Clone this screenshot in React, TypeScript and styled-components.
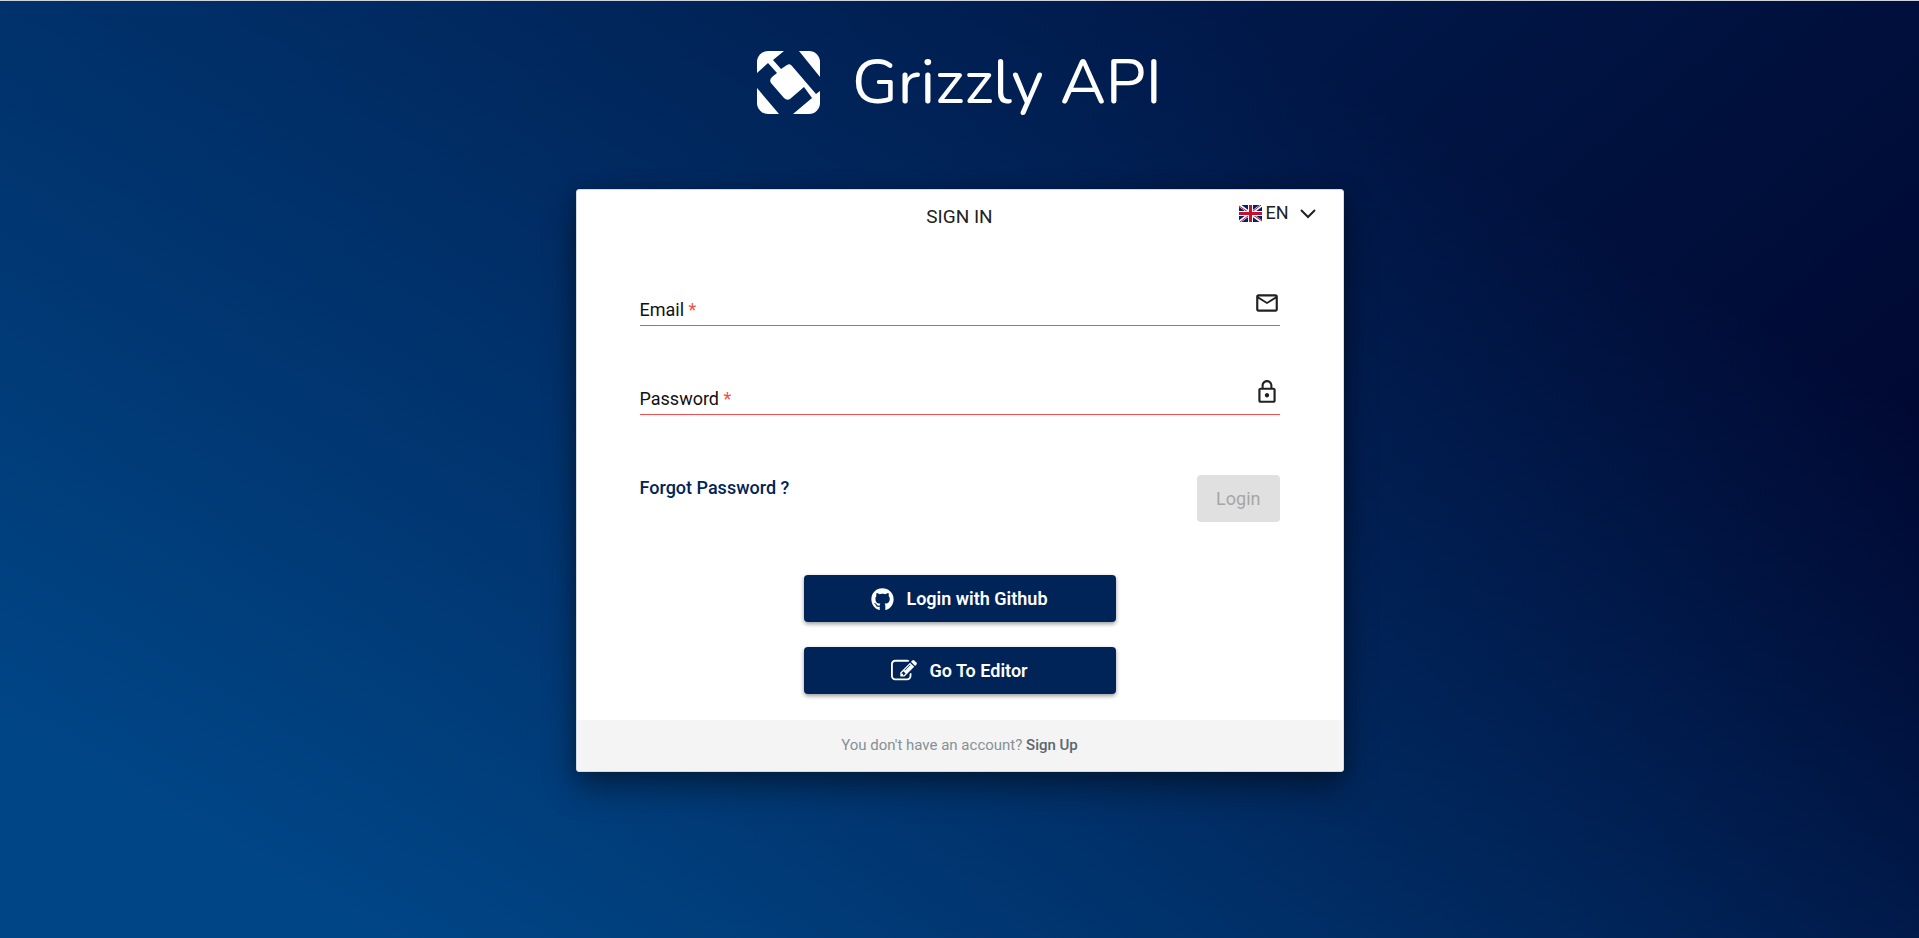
import React from "react";
import styled, { createGlobalStyle } from "styled-components";
import { FaGithub } from "react-icons/fa";
import { MdMailOutline, MdLockOutline } from "react-icons/md";

const GlobalStyle = createGlobalStyle`
  *, *::before, *::after { box-sizing: border-box; }
  body { margin: 0; font-family: Roboto, "Liberation Sans", sans-serif; }
`;

const Page = styled.main`
  min-height: 100vh;
  padding: 32px 16px;
  border-top: 1px solid #cfd4dc;
  display: flex;
  flex-direction: column;
  align-items: center;
  background:
    linear-gradient(30deg, #004586 11%, rgba(0, 69, 134, 0) 80%),
    linear-gradient(140deg, #001e50 0%, #00194a 40%, #000026 100%);
`;

const Brand = styled.header`
  display: flex;
  align-items: center;
  gap: 32px;
  height: 98px;
  margin-bottom: 58px;
  color: #fff;
`;

const BrandName = styled.h1`
  margin: 0;
  font: 400 63px/72px "Nunito", "Open Sans", sans-serif;
  white-space: nowrap;
`;

const Card = styled.section`
  width: 100%;
  max-width: 768px;
  border: 1px solid #d3dae6;
  border-radius: 3px;
  overflow: hidden;
  background: #fff;
  box-shadow: 0 16px 32px rgba(0, 0, 0, 0.4), 0 0 16px rgba(0, 0, 0, 0.2);
`;

const CardHead = styled.div`
  display: grid;
  grid-template-columns: 1fr auto 1fr;
  align-items: start;
  padding: 11px 23px 1px;
`;

const Title = styled.h2`
  grid-column: 2;
  margin: 0;
  padding-top: 2px;
  font-size: 19px;
  line-height: 28px;
  font-weight: 400;
  color: #212121;
`;

const Language = styled.div`
  justify-self: end;
  display: flex;
  align-items: center;
  gap: 4px;
  color: #212121;
`;

const LanguageSelect = styled.select`
  appearance: none;
  border: 0;
  margin: 0;
  padding: 0;
  width: 26px;
  background: transparent;
  color: inherit;
  font: 400 18px/24px Roboto, sans-serif;
`;

const Form = styled.form`
  padding: 37px 63px 26px;
`;

const Field = styled.div`
  display: grid;
  grid-template-columns: auto 1fr 26px;
  align-items: center;
  height: 57px;
  margin-bottom: 32px;
  border-bottom: 1px solid #f44e4e;

  svg {
    margin-top: 12px;
    color: #212121;
  }
`;

const FieldLabel = styled.label`
  padding-top: 25px;
  font-size: 18px;
  line-height: 24px;
  color: #111;
`;

const Required = styled.span`
  color: #f44e4e;
`;

const FieldInput = styled.input`
  min-width: 0;
  height: 32px;
  border: 0;
  outline: 0;
  background: transparent;
  font: 400 18px/24px Roboto, sans-serif;
`;

const FormActions = styled.div`
  display: flex;
  justify-content: space-between;
  align-items: flex-start;
  padding-top: 28px;
`;

const ForgotLink = styled.a`
  font-size: 18px;
  line-height: 26px;
  font-weight: 500;
  color: #002457;
  text-decoration: none;
`;

const Button = styled.button<{ $primary?: boolean }>`
  display: flex;
  align-items: center;
  justify-content: center;
  gap: 12px;
  height: 47px;
  padding: 1px 19px 0;
  border: 0;
  border-radius: 4px;
  font: ${(p) => (p.$primary ? 600 : 400)} 18px/24px Roboto, sans-serif;
  color: ${(p) => (p.$primary ? "#fff" : "#a6a6a6")};
  background: ${(p) => (p.$primary ? "#002457" : "#e0e0e0")};
  box-shadow: ${(p) => (p.$primary ? "0 2px 4px rgba(0, 0, 0, 0.4)" : "none")};
`;

const Alternatives = styled.div`
  display: grid;
  grid-template-columns: minmax(0, 312px);
  justify-content: center;
  gap: 25px;
  padding-top: 53px;
`;

const CardFoot = styled.footer`
  padding: 14px 16px;
  background: #f4f4f4;
  text-align: center;
  font-size: 15px;
  line-height: 23px;
  color: #869096;
`;

const SignUp = styled.a`
  font-weight: 500;
  color: #5b666e;
  text-decoration: none;
`;

const Logo = () => (
  <svg width="63" height="63" viewBox="0 0 63 63" aria-hidden="true">
    <defs>
      <clipPath id="tile"><rect width="63" height="63" rx="11" /></clipPath>
    </defs>
    <g fill="#fff" clipPath="url(#tile)">
      <path d="M0 0H27L16 9L24 18L30 14Q33 12 35 15L59 43L63 40V63H36L55 47L47 36L33 48Q30 50 27 47L14 32Q12 29 15 26L20 22L11 12L0 22Z" />
      <path d="M42 0H63V26Z" />
      <path d="M0 37L22 63H0Z" />
    </g>
  </svg>
);

const Flag = () => (
  <svg width="23" height="17" viewBox="0 0 23 17" aria-hidden="true">
    <path fill="#012169" d="M0 0H23V17H0Z" />
    <path stroke="#fff" strokeWidth="3" d="M0 0L23 17M23 0L0 17" />
    <path stroke="#c8102e" strokeWidth="1" d="M0 1L9 7M23 16L14 10M22 0L14 6M1 17L9 11" />
    <path stroke="#fff" strokeWidth="5" d="M11.500 0V17M0 8.500H23" />
    <path stroke="#c8102e" strokeWidth="3" d="M11.500 0V17M0 8.500H23" />
  </svg>
);

const Chevron = () => (
  <svg width="24" height="24" viewBox="0 0 24 24" fill="none" stroke="currentColor" strokeWidth="2" aria-hidden="true">
    <path d="M5 9L12 16L19 9" />
  </svg>
);

const EditIcon = () => (
  <svg width="26" height="26" viewBox="0 0 1792 1792" fill="currentColor" aria-hidden="true">
    <path d="M888 1184l116-116-152-152-116 116v56h96v96h56zm440-720q-16-16-33 1l-350 350q-17 17-1 33t33-1l350-350q17-17 1-33zm80 594v190q0 119-84.500 203.500t-203.500 84.500h-832q-119 0-203.500-84.500t-84.500-203.500v-832q0-119 84.500-203.500t203.500-84.500h832q63 0 117 25 15 7 18 23 3 17-9 29l-49 49q-14 14-32 8-23-6-45-6h-832q-66 0-113 47t-47 113v832q0 66 47 113t113 47h832q66 0 113-47t47-113v-126q0-13 9-22l64-64q15-15 35-7t20 29zm-96-738l288 288-672 672h-288v-288zm444 132l-92 92-288-288 92-92q28-28 68-28t68 28l152 152q28 28 28 68t-28 68z" />
  </svg>
);

export default function App() {
  return (
    <>
      <GlobalStyle />
      <Page>
        <Brand>
          <Logo />
          <BrandName>Grizzly API</BrandName>
        </Brand>
        <Card>
          <CardHead>
            <Title>SIGN IN</Title>
            <Language>
              <Flag />
              <LanguageSelect aria-label="Language" defaultValue="EN">
                <option>EN</option>
                <option>FR</option>
              </LanguageSelect>
              <Chevron />
            </Language>
          </CardHead>
          <Form onSubmit={(e) => e.preventDefault()}>
            <Field>
              <FieldLabel htmlFor="email">Email <Required>*</Required></FieldLabel>
              <FieldInput id="email" type="email" required />
              <MdMailOutline size={26} />
            </Field>
            <Field>
              <FieldLabel htmlFor="password">Password <Required>*</Required></FieldLabel>
              <FieldInput id="password" type="password" required />
              <MdLockOutline size={26} />
            </Field>
            <FormActions>
              <ForgotLink href="#forgot">Forgot Password ?</ForgotLink>
              <Button type="submit" disabled>Login</Button>
            </FormActions>
            <Alternatives>
              <Button $primary type="button"><FaGithub size={23} />Login with Github</Button>
              <Button $primary type="button"><EditIcon />Go To Editor</Button>
            </Alternatives>
          </Form>
          <CardFoot>
            You don't have an account? <SignUp href="#signup">Sign Up</SignUp>
          </CardFoot>
        </Card>
      </Page>
    </>
  );
}
